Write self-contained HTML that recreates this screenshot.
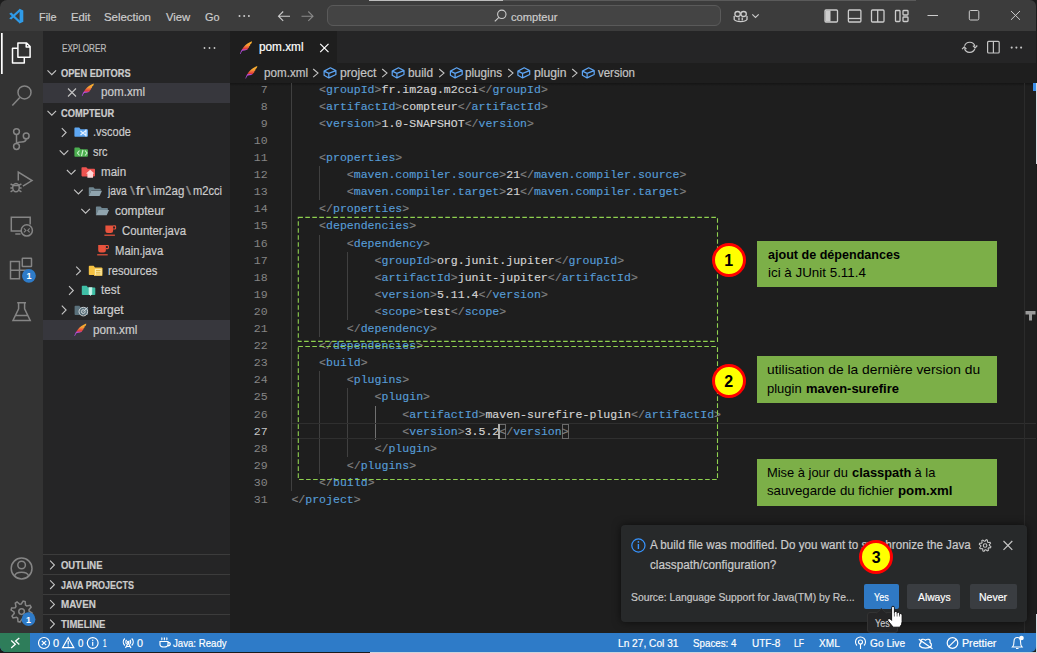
<!DOCTYPE html>
<html><head><meta charset="utf-8">
<style>
*{box-sizing:border-box;margin:0;padding:0}
html,body{width:1037px;height:653px;overflow:hidden;background:#1c1c1c}
body{position:relative;font-family:"Liberation Sans",sans-serif;color:#ccc}
.a{position:absolute}
#win{position:absolute;left:0;top:0;width:1036px;height:652px;background:#1e1e1e;border-radius:7px 6px 5px 6px;overflow:hidden}
.t{position:absolute;white-space:pre;line-height:1;transform-origin:0 0;-webkit-text-stroke:0.2px currentColor}
.menu{font-size:11.3px;color:#cccccc;top:11.2px}
.code{position:absolute;left:291.4px;font-family:"Liberation Mono",monospace;font-size:11.55px;line-height:17.1px;height:17.1px;white-space:pre;color:#d4d4d4;-webkit-text-stroke:0.15px currentColor}
.ln{position:absolute;left:230px;width:37.6px;text-align:right;font-family:"Liberation Mono",monospace;font-size:11.55px;line-height:17.1px;color:#858585}
.ln.act{color:#c6c6c6}
.tg{color:#569cd6}.br{color:#808080}
.ig{position:absolute;width:1px;background:#404040}
.ig.iga{background:#707070}
.tree{font-size:11.5px;color:#cccccc;top:0}
.hdr{font-size:9.4px;font-weight:bold;color:#cccccc}
.sb{font-size:10.2px;color:#ffffff}
.bc{font-size:11.5px;color:#a9a9a9}
.note{position:absolute;background:#7caf48;color:#1a1a1a;font-size:11.3px;line-height:18.3px;padding:5.5px 0 0 10px}
.note b{font-weight:bold}
.circ{position:absolute;z-index:10;width:34px;height:34px;border-radius:50%;background:#ffff00;border:3.2px solid #ff0000;color:#000;font-weight:bold;font-size:16px;text-align:center;line-height:30.5px}
.btn{position:absolute;height:25px;top:583.9px;border-radius:2px;font-size:11px;color:#fff;text-align:center;line-height:25px}
</style></head><body>
<div class="a" style="left:1036px;top:83px;width:1px;height:81px;background:#d9dde3"></div>
<div class="a" style="left:1036px;top:614px;width:1px;height:39px;background:#d9dde3"></div>
<div class="a" style="left:370px;top:652px;width:667px;height:1px;background:#d0d4da"></div>
<div id="win">
<!-- backgrounds -->
<div class="a" style="left:0;top:0;width:1036px;height:31px;background:#3c3c3c"></div>
<div class="a" style="left:369px;top:0;width:134px;height:1px;background:#bdbdbd"></div>
<div class="a" style="left:503px;top:0;width:413px;height:1px;background:#5a5a5a"></div>
<div class="a" style="left:0;top:118px;width:1px;height:11px;background:#3f6ea8"></div>
<div class="a" style="left:0;top:335px;width:1px;height:10px;background:#3f6ea8"></div>
<div class="a" style="left:0;top:31px;width:43px;height:602px;background:#333333"></div>
<div class="a" style="left:43px;top:31px;width:187px;height:602px;background:#252526"></div>
<div class="a" style="left:230px;top:31px;width:806px;height:32px;background:#252526"></div>
<div class="a" style="left:230px;top:31px;width:107px;height:32px;background:#1e1e1e"></div>
<div class="a" style="left:0;top:633px;width:1036px;height:20px;background:#2e7bc8"></div>
<div class="a" style="left:0;top:633px;width:30.4px;height:20px;background:#2e7d5a"></div>

<!-- title bar -->
<div class="a" style="left:327.2px;top:5.3px;width:394px;height:21.2px;border:1px solid #5a5a5a;border-radius:6px;background:#444444"></div>
<!-- sidebar -->
<div class="a" style="left:43px;top:83px;width:187px;height:19.8px;background:#37373d"></div>
<div class="a" style="left:43px;top:319.5px;width:187px;height:20px;background:#37373d"></div>
<div class="a" style="left:43px;top:554px;width:187px;height:1px;background:#3c3c3c"></div>
<div class="a" style="left:43px;top:574px;width:187px;height:1px;background:#3c3c3c"></div>
<div class="a" style="left:43px;top:594px;width:187px;height:1px;background:#3c3c3c"></div>
<div class="a" style="left:43px;top:613.5px;width:187px;height:1px;background:#3c3c3c"></div>

<!-- tabs & breadcrumbs -->
<div class="a" style="left:230px;top:82.8px;width:806px;height:3px;background:linear-gradient(#141414,rgba(30,30,30,0))"></div>

<!-- editor -->
<div class="ig" style="left:291.4px;top:82.80px;height:408.25px"></div>
<div class="ig" style="left:319.1px;top:166.15px;height:34.20px"></div>
<div class="ig" style="left:319.1px;top:234.55px;height:102.60px"></div>
<div class="ig" style="left:319.1px;top:371.35px;height:102.60px"></div>
<div class="ig" style="left:346.8px;top:251.65px;height:68.40px"></div>
<div class="ig" style="left:346.8px;top:388.45px;height:68.40px"></div>
<div class="ig iga" style="left:374.6px;top:405.55px;height:34.20px"></div>
<div class="a" style="left:292.2px;top:422.5px;width:744px;height:16.5px;border-top:1px solid #2f2f2f;border-bottom:1px solid #2f2f2f"></div>
<div class="a" style="left:499.3px;top:423.5px;width:6.93px;height:15px;border:1px solid #6a6a6a"></div>
<div class="a" style="left:561.7px;top:423.5px;width:6.93px;height:15px;border:1px solid #6a6a6a"></div>
<div class="ln" style="top:80.65px">7</div>
<div class="code" style="top:80.65px">    <span class="br">&lt;</span><span class="tg">groupId</span><span class="br">&gt;</span>fr.im2ag.m2cci<span class="br">&lt;/</span><span class="tg">groupId</span><span class="br">&gt;</span></div>
<div class="ln" style="top:97.75px">8</div>
<div class="code" style="top:97.75px">    <span class="br">&lt;</span><span class="tg">artifactId</span><span class="br">&gt;</span>compteur<span class="br">&lt;/</span><span class="tg">artifactId</span><span class="br">&gt;</span></div>
<div class="ln" style="top:114.85px">9</div>
<div class="code" style="top:114.85px">    <span class="br">&lt;</span><span class="tg">version</span><span class="br">&gt;</span>1.0-SNAPSHOT<span class="br">&lt;/</span><span class="tg">version</span><span class="br">&gt;</span></div>
<div class="ln" style="top:131.95px">10</div>
<div class="ln" style="top:149.05px">11</div>
<div class="code" style="top:149.05px">    <span class="br">&lt;</span><span class="tg">properties</span><span class="br">&gt;</span></div>
<div class="ln" style="top:166.15px">12</div>
<div class="code" style="top:166.15px">        <span class="br">&lt;</span><span class="tg">maven.compiler.source</span><span class="br">&gt;</span>21<span class="br">&lt;/</span><span class="tg">maven.compiler.source</span><span class="br">&gt;</span></div>
<div class="ln" style="top:183.25px">13</div>
<div class="code" style="top:183.25px">        <span class="br">&lt;</span><span class="tg">maven.compiler.target</span><span class="br">&gt;</span>21<span class="br">&lt;/</span><span class="tg">maven.compiler.target</span><span class="br">&gt;</span></div>
<div class="ln" style="top:200.35px">14</div>
<div class="code" style="top:200.35px">    <span class="br">&lt;/</span><span class="tg">properties</span><span class="br">&gt;</span></div>
<div class="ln" style="top:217.45px">15</div>
<div class="code" style="top:217.45px">    <span class="br">&lt;</span><span class="tg">dependencies</span><span class="br">&gt;</span></div>
<div class="ln" style="top:234.55px">16</div>
<div class="code" style="top:234.55px">        <span class="br">&lt;</span><span class="tg">dependency</span><span class="br">&gt;</span></div>
<div class="ln" style="top:251.65px">17</div>
<div class="code" style="top:251.65px">            <span class="br">&lt;</span><span class="tg">groupId</span><span class="br">&gt;</span>org.junit.jupiter<span class="br">&lt;/</span><span class="tg">groupId</span><span class="br">&gt;</span></div>
<div class="ln" style="top:268.75px">18</div>
<div class="code" style="top:268.75px">            <span class="br">&lt;</span><span class="tg">artifactId</span><span class="br">&gt;</span>junit-jupiter<span class="br">&lt;/</span><span class="tg">artifactId</span><span class="br">&gt;</span></div>
<div class="ln" style="top:285.85px">19</div>
<div class="code" style="top:285.85px">            <span class="br">&lt;</span><span class="tg">version</span><span class="br">&gt;</span>5.11.4<span class="br">&lt;/</span><span class="tg">version</span><span class="br">&gt;</span></div>
<div class="ln" style="top:302.95px">20</div>
<div class="code" style="top:302.95px">            <span class="br">&lt;</span><span class="tg">scope</span><span class="br">&gt;</span>test<span class="br">&lt;/</span><span class="tg">scope</span><span class="br">&gt;</span></div>
<div class="ln" style="top:320.05px">21</div>
<div class="code" style="top:320.05px">        <span class="br">&lt;/</span><span class="tg">dependency</span><span class="br">&gt;</span></div>
<div class="ln" style="top:337.15px">22</div>
<div class="code" style="top:337.15px">    <span class="br">&lt;/</span><span class="tg">dependencies</span><span class="br">&gt;</span></div>
<div class="ln" style="top:354.25px">23</div>
<div class="code" style="top:354.25px">    <span class="br">&lt;</span><span class="tg">build</span><span class="br">&gt;</span></div>
<div class="ln" style="top:371.35px">24</div>
<div class="code" style="top:371.35px">        <span class="br">&lt;</span><span class="tg">plugins</span><span class="br">&gt;</span></div>
<div class="ln" style="top:388.45px">25</div>
<div class="code" style="top:388.45px">            <span class="br">&lt;</span><span class="tg">plugin</span><span class="br">&gt;</span></div>
<div class="ln" style="top:405.55px">26</div>
<div class="code" style="top:405.55px">                <span class="br">&lt;</span><span class="tg">artifactId</span><span class="br">&gt;</span>maven-surefire-plugin<span class="br">&lt;/</span><span class="tg">artifactId</span><span class="br">&gt;</span></div>
<div class="ln act" style="top:422.65px">27</div>
<div class="code" style="top:422.65px">                <span class="br">&lt;</span><span class="tg">version</span><span class="br">&gt;</span>3.5.2<span class="br">&lt;/</span><span class="tg">version</span><span class="br">&gt;</span></div>
<div class="ln" style="top:439.75px">28</div>
<div class="code" style="top:439.75px">            <span class="br">&lt;/</span><span class="tg">plugin</span><span class="br">&gt;</span></div>
<div class="ln" style="top:456.85px">29</div>
<div class="code" style="top:456.85px">        <span class="br">&lt;/</span><span class="tg">plugins</span><span class="br">&gt;</span></div>
<div class="ln" style="top:473.95px">30</div>
<div class="code" style="top:473.95px">    <span class="br">&lt;/</span><span class="tg">build</span><span class="br">&gt;</span></div>
<div class="ln" style="top:491.05px">31</div>
<div class="code" style="top:491.05px"><span class="br">&lt;/</span><span class="tg">project</span><span class="br">&gt;</span></div>
<div class="a" style="left:498.2px;top:423.5px;width:1.5px;height:15px;background:#aeafad"></div>
<div class="a" style="left:1024px;top:83px;width:1px;height:550px;background:#2b2b2b"></div>
<div class="a" style="left:1033px;top:83px;width:3px;height:8px;background:#3b8eea"></div>

<!-- annotations -->
<svg class="a" style="left:0;top:0" width="1037" height="653">
<g fill="none" stroke="#8fd14f" stroke-width="1.1" stroke-dasharray="4.6 2.4">
<rect x="298.3" y="217.4" width="419.2" height="124"/>
<rect x="298.3" y="346.5" width="419.2" height="133"/>
</g>
</svg>
<div class="note" style="left:757.4px;top:240.7px;width:239.6px;height:46px"></div>
<div class="note" style="left:757.4px;top:356.2px;width:239.6px;height:46.8px"></div>
<div class="note" style="left:757.4px;top:458.7px;width:239.6px;height:47px"></div>
<div class="circ" style="left:711.7px;top:242.6px">1</div>
<div class="circ" style="left:711.7px;top:363.8px">2</div>

<!-- notification -->
<div class="a" style="left:621.2px;top:525.2px;width:405.5px;height:96.8px;background:#27292a;border-radius:4px;box-shadow:0 0 8px rgba(0,0,0,0.6)"></div>
<div class="btn" style="left:863.9px;width:35px;background:#2f79c4"></div>
<div class="btn" style="left:907.3px;width:53px;background:#3a3d41"></div>
<div class="btn" style="left:969.5px;width:47.3px;background:#3a3d41"></div>
<div class="a" style="left:866.7px;top:612.3px;width:31px;height:21px;background:#252526;border:1px solid #333333;border-radius:3px"></div>
<svg class="a" style="left:876px;top:607.5px" width="11" height="6"><path d="M0 5.5 L5.4 0.5 L10.8 5.5" fill="#252526" stroke="#333333" stroke-width="1"/><rect x="0.8" y="4.9" width="9.4" height="1.2" fill="#252526"/></svg>
<div class="circ" style="left:859.2px;top:540px">3</div>

<!-- status bar -->

<div class="t" style="left:38.50px;top:10.68px;font-size:11.6px;color:#cccccc;transform:scaleX(0.9358);">File</div>
<div class="t" style="left:70.60px;top:10.68px;font-size:11.6px;color:#cccccc;transform:scaleX(0.9700);">Edit</div>
<div class="t" style="left:104.00px;top:10.68px;font-size:11.6px;color:#cccccc;transform:scaleX(0.9848);">Selection</div>
<div class="t" style="left:165.70px;top:10.68px;font-size:11.6px;color:#cccccc;transform:scaleX(0.9730);">View</div>
<div class="t" style="left:204.50px;top:10.68px;font-size:11.6px;color:#cccccc;transform:scaleX(0.9370);">Go</div>
<div class="t" style="left:511.00px;top:10.98px;font-size:11.6px;color:#cccccc;transform:scaleX(0.9617);">compteur</div>
<div class="t" style="left:61.50px;top:43.68px;font-size:10.3px;color:#bbbbbb;transform:scaleX(0.7897);">EXPLORER</div>
<div class="t" style="left:61.30px;top:68.58px;font-size:10.3px;color:#cccccc;font-weight:bold;transform:scaleX(0.8963);">OPEN EDITORS</div>
<div class="t" style="left:61.30px;top:108.88px;font-size:10.3px;color:#cccccc;font-weight:bold;transform:scaleX(0.9025);">COMPTEUR</div>
<div class="t" style="left:61.20px;top:560.78px;font-size:10.3px;color:#cccccc;font-weight:bold;transform:scaleX(0.9181);">OUTLINE</div>
<div class="t" style="left:61.20px;top:580.58px;font-size:10.3px;color:#cccccc;font-weight:bold;transform:scaleX(0.8684);">JAVA PROJECTS</div>
<div class="t" style="left:61.20px;top:600.28px;font-size:10.3px;color:#cccccc;font-weight:bold;transform:scaleX(0.9554);">MAVEN</div>
<div class="t" style="left:61.20px;top:619.88px;font-size:10.3px;color:#cccccc;font-weight:bold;transform:scaleX(0.9236);">TIMELINE</div>
<div class="t" style="left:100.70px;top:86.49px;font-size:12.3px;color:#cccccc;transform:scaleX(0.9467);">pom.xml</div>
<div class="t" style="left:93.40px;top:126.09px;font-size:12.3px;color:#cccccc;transform:scaleX(0.8939);">.vscode</div>
<div class="t" style="left:93.40px;top:145.89px;font-size:12.3px;color:#cccccc;transform:scaleX(0.8902);">src</div>
<div class="t" style="left:100.70px;top:165.69px;font-size:12.3px;color:#cccccc;transform:scaleX(0.9418);">main</div>
<div class="t" style="left:114.90px;top:205.29px;font-size:12.3px;color:#cccccc;transform:scaleX(0.9712);">compteur</div>
<div class="t" style="left:122.00px;top:225.09px;font-size:12.3px;color:#cccccc;transform:scaleX(0.9265);">Counter.java</div>
<div class="t" style="left:115.20px;top:244.89px;font-size:12.3px;color:#cccccc;transform:scaleX(0.9155);">Main.java</div>
<div class="t" style="left:107.70px;top:264.69px;font-size:12.3px;color:#cccccc;transform:scaleX(0.9130);">resources</div>
<div class="t" style="left:100.90px;top:284.49px;font-size:12.3px;color:#cccccc;transform:scaleX(0.9533);">test</div>
<div class="t" style="left:93.20px;top:304.29px;font-size:12.3px;color:#cccccc;transform:scaleX(0.9762);">target</div>
<div class="t" style="left:93.20px;top:324.09px;font-size:12.3px;color:#cccccc;transform:scaleX(0.9554);">pom.xml</div>
<div class="t" style="left:108.27px;top:185.49px;font-size:12.3px;color:#cccccc;transform:scaleX(0.8341);">java</div>
<div class="t" style="left:130.00px;top:185.49px;font-size:12.3px;color:#8a8a8a;transform:scaleX(1.4599);">\</div>
<div class="t" style="left:136.40px;top:185.49px;font-size:12.3px;color:#cccccc;transform:scaleX(1.1561);">fr</div>
<div class="t" style="left:146.20px;top:185.49px;font-size:12.3px;color:#8a8a8a;transform:scaleX(1.5474);">\</div>
<div class="t" style="left:152.60px;top:185.49px;font-size:12.3px;color:#cccccc;transform:scaleX(0.9343);">im2ag</div>
<div class="t" style="left:186.40px;top:185.49px;font-size:12.3px;color:#8a8a8a;transform:scaleX(1.4599);">\</div>
<div class="t" style="left:192.50px;top:185.49px;font-size:12.3px;color:#cccccc;transform:scaleX(0.9027);">m2cci</div>
<div class="t" style="left:258.50px;top:41.42px;font-size:12.5px;color:#ffffff;transform:scaleX(0.9423);">pom.xml</div>
<div class="t" style="left:264.20px;top:67.09px;font-size:12.3px;color:#c4c4c4;transform:scaleX(0.9467);">pom.xml</div>
<div class="t" style="left:339.70px;top:67.09px;font-size:12.3px;color:#c4c4c4;transform:scaleX(0.9831);">project</div>
<div class="t" style="left:408.00px;top:67.09px;font-size:12.3px;color:#c4c4c4;transform:scaleX(0.9615);">build</div>
<div class="t" style="left:465.00px;top:67.09px;font-size:12.3px;color:#c4c4c4;transform:scaleX(0.9493);">plugins</div>
<div class="t" style="left:533.50px;top:67.09px;font-size:12.3px;color:#c4c4c4;transform:scaleX(0.9901);">plugin</div>
<div class="t" style="left:598.00px;top:67.09px;font-size:12.3px;color:#c4c4c4;transform:scaleX(0.9332);">version</div>
<div class="t" style="left:650.30px;top:539.12px;font-size:12.5px;color:#cccccc;transform:scaleX(0.9305);">A build file was modified. Do you want to synchronize the Java</div>
<div class="t" style="left:650.30px;top:558.62px;font-size:12.5px;color:#cccccc;transform:scaleX(0.9362);">classpath/configuration?</div>
<div class="t" style="left:631.20px;top:590.78px;font-size:11.6px;color:#c8c8c8;transform:scaleX(0.8923);">Source: Language Support for Java(TM) by Re...</div>
<div class="t" style="left:874.20px;top:590.98px;font-size:11.6px;color:#ffffff;transform:scaleX(0.7820);">Yes</div>
<div class="t" style="left:917.90px;top:590.98px;font-size:11.6px;color:#ffffff;transform:scaleX(0.8898);">Always</div>
<div class="t" style="left:979.30px;top:590.98px;font-size:11.6px;color:#ffffff;transform:scaleX(0.9079);">Never</div>
<div class="t" style="left:874.70px;top:616.88px;font-size:11.6px;color:#c8c8c8;transform:scaleX(0.7768);">Yes</div>
<div class="t" style="left:52.50px;top:637.85px;font-size:11.4px;color:#ffffff;transform:scaleX(0.9606);">0</div>
<div class="t" style="left:77.60px;top:637.85px;font-size:11.4px;color:#ffffff;transform:scaleX(0.8504);">0</div>
<div class="t" style="left:102.50px;top:637.85px;font-size:11.4px;color:#ffffff;transform:scaleX(0.5512);">1</div>
<div class="t" style="left:137.40px;top:637.85px;font-size:11.4px;color:#ffffff;transform:scaleX(0.9449);">0</div>
<div class="t" style="left:173.00px;top:637.85px;font-size:11.4px;color:#ffffff;transform:scaleX(0.8458);">Java: Ready</div>
<div class="t" style="left:618.00px;top:637.85px;font-size:11.4px;color:#ffffff;transform:scaleX(0.8920);">Ln 27, Col 31</div>
<div class="t" style="left:693.30px;top:637.85px;font-size:11.4px;color:#ffffff;transform:scaleX(0.8580);">Spaces: 4</div>
<div class="t" style="left:751.70px;top:637.85px;font-size:11.4px;color:#ffffff;transform:scaleX(0.8762);">UTF-8</div>
<div class="t" style="left:794.00px;top:637.85px;font-size:11.4px;color:#ffffff;transform:scaleX(0.7519);">LF</div>
<div class="t" style="left:818.80px;top:637.85px;font-size:11.4px;color:#ffffff;transform:scaleX(0.8870);">XML</div>
<div class="t" style="left:869.50px;top:637.85px;font-size:11.4px;color:#ffffff;transform:scaleX(0.8931);">Go Live</div>
<div class="t" style="left:962.10px;top:637.85px;font-size:11.4px;color:#ffffff;transform:scaleX(0.9361);">Prettier</div>
<div class="t" style="left:767.70px;top:248.86px;font-size:12.799999999999999px;color:#000000;-webkit-text-stroke:0;font-weight:bold;transform:scaleX(0.9820);">ajout de dépendances</div>
<div class="t" style="left:767.70px;top:266.13px;font-size:13.2px;color:#000000;-webkit-text-stroke:0;transform:scaleX(1.0145);">ici à JUnit 5.11.4</div>
<div class="t" style="left:767.30px;top:363.33px;font-size:13.2px;color:#000000;-webkit-text-stroke:0;transform:scaleX(1.0456);">utilisation de la dernière version du</div>
<div class="t" style="left:767.30px;top:381.63px;font-size:13.2px;color:#000000;-webkit-text-stroke:0;transform:scaleX(0.9832);">plugin </div>
<div class="t" style="left:805.54px;top:381.63px;font-size:13.2px;color:#000000;-webkit-text-stroke:0;font-weight:bold;transform:scaleX(0.9832);">maven-surefire</div>
<div class="t" style="left:767.30px;top:466.23px;font-size:13.2px;color:#000000;-webkit-text-stroke:0;transform:scaleX(0.9767);">Mise à jour du </div>
<div class="t" style="left:851.86px;top:466.23px;font-size:13.2px;color:#000000;-webkit-text-stroke:0;font-weight:bold;transform:scaleX(0.9767);">classpath</div>
<div class="t" style="left:911.33px;top:466.23px;font-size:13.2px;color:#000000;-webkit-text-stroke:0;transform:scaleX(0.9767);"> à la</div>
<div class="t" style="left:767.30px;top:484.43px;font-size:13.2px;color:#000000;-webkit-text-stroke:0;transform:scaleX(1.0046);">sauvegarde du fichier </div>
<div class="t" style="left:897.78px;top:484.43px;font-size:13.2px;color:#000000;-webkit-text-stroke:0;font-weight:bold;transform:scaleX(1.0046);">pom.xml</div>
<svg class="a" style="left:0;top:0;pointer-events:none" width="1037" height="653" viewBox="0 0 1037 653">
<defs>
<linearGradient id="fg" x1="0" y1="0" x2="0" y2="1">
<stop offset="0" stop-color="#f7b32e"/><stop offset="0.3" stop-color="#f6a032"/><stop offset="0.42" stop-color="#f2703c"/><stop offset="0.6" stop-color="#dc3a3a"/><stop offset="0.68" stop-color="#b84bd4"/><stop offset="1" stop-color="#a048d0"/>
</linearGradient>
</defs>
<g fill="#2f9be8"><path d="M19.6 8.8 L23.3 10.6 L23.3 21.8 L19.6 23.5 Z"/><path d="M19.8 8.8 L21 10.5 L11.3 19.6 L9.2 18.5 Z"/><path d="M9.2 13.7 L11.3 12.6 L21 21.8 L19.8 23.5 Z"/></g>
<g fill="#cccccc"><circle cx="239.5" cy="16" r="1"/><circle cx="244.2" cy="16" r="1"/><circle cx="248.9" cy="16" r="1"/></g>
<g fill="none" stroke="#cccccc" stroke-width="1.1"><path d="M278.5 16.2 H290 M283.2 11.5 L278.5 16.2 L283.2 20.9"/></g>
<g fill="none" stroke="#8a8a8a" stroke-width="1.1"><path d="M301.5 16.2 H313 M308.3 11.5 L313 16.2 L308.3 20.9"/></g>
<g fill="none" stroke="#cccccc" stroke-width="1.1"><circle cx="501.8" cy="14.3" r="4.2"/><path d="M498.9 17.3 L494.8 21.4"/></g>
<g fill="none" stroke="#cccccc" stroke-width="1.3"><ellipse cx="737.6" cy="14" rx="2.7" ry="2.5"/><ellipse cx="743.6" cy="14" rx="2.7" ry="2.5"/><path d="M734.2 16 V19.5 C736 22.3 745.2 22.3 747 19.5 V16"/></g>
<g fill="#cccccc"><rect x="738.3" y="17.5" width="1.3" height="3"/><rect x="741.6" y="17.5" width="1.3" height="3"/></g>
<path d="M752.3 14.3 L755.5 17.5 L758.7 14.3" fill="none" stroke="#cccccc" stroke-width="1.1"/>
<g fill="none" stroke="#cccccc" stroke-width="1.3"><rect x="825" y="10" width="12.5" height="12" rx="1"/><rect x="848.4" y="10" width="12.5" height="12" rx="1"/><path d="M848.4 18.5 H860.9"/><rect x="871.5" y="10" width="12.5" height="12" rx="1"/><path d="M877.7 10 V22"/><rect x="895.5" y="10.5" width="4.5" height="11" rx="0.8"/><rect x="903" y="10.5" width="5" height="4.5" rx="0.8"/><rect x="903" y="17" width="5" height="4.5" rx="0.8"/></g>
<rect x="825.5" y="10.5" width="5" height="11" fill="#cccccc"/>
<g fill="none" stroke="#cccccc" stroke-width="1"><path d="M927.5 15.5 H938"/><rect x="969.3" y="10.5" width="9.5" height="9.5" rx="1.2"/><path d="M1011 11 L1020 19.8 M1020 11 L1011 19.8"/></g>
<g fill="none" stroke="#ffffff" stroke-width="1.5" stroke-linejoin="round"><path d="M17.9 43 H26.6 L30.1 46.6 V57.2 H17.9 Z M26.2 43 V47 H30.1"/><path d="M17.9 48.3 H12.5 V62.9 H24.3 V57.2"/></g>
<rect x="1" y="33" width="1.7" height="41" fill="#ffffff"/>
<g fill="none" stroke="#858585" stroke-width="1.5"><circle cx="24.5" cy="92.4" r="6.5"/><path d="M19.8 97.5 L12.3 105.5"/><circle cx="16.5" cy="131.6" r="2.9"/><circle cx="26.2" cy="135.9" r="2.9"/><circle cx="16.5" cy="146.5" r="2.9"/><path d="M16.5 134.5 V143.6 M26.2 138.8 C26.2 141.6 24.5 142 21.5 142 C18.3 142 16.5 142.3 16.5 144"/><path d="M18.3 180.5 V172.2 L32 180.6 L22.9 186.2"/><ellipse cx="16" cy="187.6" rx="3.3" ry="4.2"/><path d="M12.8 185.6 H19.2 M10.6 184 L12.9 185.2 M21.4 184 L19.1 185.2 M10.4 188 H12.7 M21.6 188 H19.3 M10.6 191.8 L12.9 190.4 M21.4 191.8 L19.1 190.4"/><path d="M21 231 H11.3 V217.2 H30.2 V224.5"/><path d="M15.3 233.9 H20.5"/><circle cx="26.8" cy="230.4" r="5.6"/><path d="M10.5 261.6 H19.5 V278.8 H10.5 Z M10.5 270.2 H28 V278.8 M19.5 270.2"/><rect x="22.3" y="258.2" width="9.2" height="8.3" rx="0.5"/><path d="M17.2 302.8 H26 M18.6 302.8 V308.8 L13 320.4 H30.2 L24.6 308.8 V302.8 M15.2 315.5 H28"/><circle cx="21.6" cy="568.5" r="10.4"/><circle cx="21.6" cy="565" r="3.8"/><path d="M14.5 576 C16 571 27 571 28.7 576"/></g>
<g fill="none" stroke="#858585" stroke-width="1.1"><path d="M23.9 228.4 L25.9 230.4 L23.9 232.4 M29.7 228.4 L27.7 230.4 L29.7 232.4"/></g>
<g fill="none" stroke="#858585" stroke-width="1.5"><path d="M29.19 611.23 L32.09 613.16 L31.58 615.17 L28.12 615.51 L27.23 616.70 L27.91 620.11 L26.13 621.18 L23.45 618.97 L21.97 619.19 L20.04 622.09 L18.03 621.58 L17.69 618.12 L16.50 617.23 L13.09 617.91 L12.02 616.13 L14.23 613.45 L14.01 611.97 L11.11 610.04 L11.62 608.03 L15.08 607.69 L15.97 606.50 L15.29 603.09 L17.07 602.02 L19.75 604.23 L21.23 604.01 L23.16 601.11 L25.17 601.62 L25.51 605.08 L26.70 605.97 L30.11 605.29 L31.18 607.07 L28.97 609.75 Z"/><circle cx="21.6" cy="611.6" r="2.8"/></g>
<circle cx="28.9" cy="275.8" r="6.9" fill="#2e7bc8"/><text x="28.9" y="279.2" font-family="Liberation Sans" font-size="9" font-weight="bold" fill="#fff" text-anchor="middle">1</text>
<circle cx="28.5" cy="619.2" r="6.9" fill="#2e7bc8"/><text x="28.5" y="622.6" font-family="Liberation Sans" font-size="9" font-weight="bold" fill="#fff" text-anchor="middle">1</text>
<g fill="#cccccc"><circle cx="204.5" cy="48" r="0.9"/><circle cx="209.5" cy="48" r="0.9"/><circle cx="214.5" cy="48" r="0.9"/></g>
<path d="M47.5 70.3 L51.8 74.6 L56.099999999999994 70.3" fill="none" stroke="#c5c5c5" stroke-width="1.1"/>
<path d="M47.5 110.8 L51.8 115.1 L56.099999999999994 110.8" fill="none" stroke="#c5c5c5" stroke-width="1.1"/>
<path d="M61.8 128.2 L66.1 132.5 L61.8 136.8" fill="none" stroke="#c5c5c5" stroke-width="1.1"/>
<path d="M59.7 150.4 L64 154.7 L68.3 150.4" fill="none" stroke="#c5c5c5" stroke-width="1.1"/>
<path d="M66.9 170.0 L71.2 174.29999999999998 L75.5 170.0" fill="none" stroke="#c5c5c5" stroke-width="1.1"/>
<path d="M74.10000000000001 189.60000000000002 L78.4 193.9 L82.7 189.60000000000002" fill="none" stroke="#c5c5c5" stroke-width="1.1"/>
<path d="M81.3 208.8 L85.6 213.1 L89.89999999999999 208.8" fill="none" stroke="#c5c5c5" stroke-width="1.1"/>
<path d="M76.2 266.59999999999997 L80.5 270.9 L76.2 275.2" fill="none" stroke="#c5c5c5" stroke-width="1.1"/>
<path d="M69.0 286.2 L73.3 290.5 L69.0 294.8" fill="none" stroke="#c5c5c5" stroke-width="1.1"/>
<path d="M61.8 305.7 L66.1 310 L61.8 314.3" fill="none" stroke="#c5c5c5" stroke-width="1.1"/>
<path d="M50.099999999999994 560.7 L54.4 565 L50.099999999999994 569.3" fill="none" stroke="#c5c5c5" stroke-width="1.1"/>
<path d="M50.099999999999994 580.4000000000001 L54.4 584.7 L50.099999999999994 589.0" fill="none" stroke="#c5c5c5" stroke-width="1.1"/>
<path d="M50.099999999999994 600.1 L54.4 604.4 L50.099999999999994 608.6999999999999" fill="none" stroke="#c5c5c5" stroke-width="1.1"/>
<path d="M50.099999999999994 619.7 L54.4 624 L50.099999999999994 628.3" fill="none" stroke="#c5c5c5" stroke-width="1.1"/>
<path d="M68 88.5 L76 96.5 M76 88.5 L68 96.5" fill="none" stroke="#c5c5c5" stroke-width="1.1"/>
<g transform="translate(240,41.3) scale(1.0)"><path d="M0 12.6 C1.5 8 4.5 3 11.9 0 C12.2 1.5 11.2 2.6 10 3.3 C10.6 3.6 10.2 4.6 9 5.3 C9.4 5.9 8.8 6.8 7.8 7.4 C8 8.1 6.6 8.7 5.5 8.9 C4.6 9.2 3.2 9.2 2.4 9.4 C1.6 10.5 1 11.5 0.7 12.6 Z" fill="url(#fg)"/></g>
<g transform="translate(245.3,66) scale(1.0)"><path d="M0 12.6 C1.5 8 4.5 3 11.9 0 C12.2 1.5 11.2 2.6 10 3.3 C10.6 3.6 10.2 4.6 9 5.3 C9.4 5.9 8.8 6.8 7.8 7.4 C8 8.1 6.6 8.7 5.5 8.9 C4.6 9.2 3.2 9.2 2.4 9.4 C1.6 10.5 1 11.5 0.7 12.6 Z" fill="url(#fg)"/></g>
<g transform="translate(81.8,83.5) scale(1.0)"><path d="M0 12.6 C1.5 8 4.5 3 11.9 0 C12.2 1.5 11.2 2.6 10 3.3 C10.6 3.6 10.2 4.6 9 5.3 C9.4 5.9 8.8 6.8 7.8 7.4 C8 8.1 6.6 8.7 5.5 8.9 C4.6 9.2 3.2 9.2 2.4 9.4 C1.6 10.5 1 11.5 0.7 12.6 Z" fill="url(#fg)"/></g>
<g transform="translate(74.3,323.5) scale(1.0)"><path d="M0 12.6 C1.5 8 4.5 3 11.9 0 C12.2 1.5 11.2 2.6 10 3.3 C10.6 3.6 10.2 4.6 9 5.3 C9.4 5.9 8.8 6.8 7.8 7.4 C8 8.1 6.6 8.7 5.5 8.9 C4.6 9.2 3.2 9.2 2.4 9.4 C1.6 10.5 1 11.5 0.7 12.6 Z" fill="url(#fg)"/></g>
<path d="M320.2 43.8 L328.5 52.1 M328.5 43.8 L320.2 52.1" fill="none" stroke="#ffffff" stroke-width="1.2"/>
<path d="M313.2 69 L318.0 73.1 L313.2 77.2" fill="none" stroke="#c4c4c4" stroke-width="1.1"/>
<path d="M382.2 69 L387.0 73.1 L382.2 77.2" fill="none" stroke="#c4c4c4" stroke-width="1.1"/>
<path d="M439.2 69 L444.0 73.1 L439.2 77.2" fill="none" stroke="#c4c4c4" stroke-width="1.1"/>
<path d="M508.2 69 L513.0 73.1 L508.2 77.2" fill="none" stroke="#c4c4c4" stroke-width="1.1"/>
<path d="M572.1999999999999 69 L577.0 73.1 L572.1999999999999 77.2" fill="none" stroke="#c4c4c4" stroke-width="1.1"/>
<g transform="translate(323.5,67.2)" fill="none" stroke="#5ea6f5" stroke-width="1.2" stroke-linejoin="round"><path d="M0.6 3.9 L6.9 0.6 L12.4 3.4 V7.3 L5.3 10.7 L0.6 8 Z M0.6 3.9 L5.3 6.2 L12.4 3.4 M5.3 6.2 V10.7"/></g>
<g transform="translate(391.6,67.2)" fill="none" stroke="#5ea6f5" stroke-width="1.2" stroke-linejoin="round"><path d="M0.6 3.9 L6.9 0.6 L12.4 3.4 V7.3 L5.3 10.7 L0.6 8 Z M0.6 3.9 L5.3 6.2 L12.4 3.4 M5.3 6.2 V10.7"/></g>
<g transform="translate(449.8,67.2)" fill="none" stroke="#5ea6f5" stroke-width="1.2" stroke-linejoin="round"><path d="M0.6 3.9 L6.9 0.6 L12.4 3.4 V7.3 L5.3 10.7 L0.6 8 Z M0.6 3.9 L5.3 6.2 L12.4 3.4 M5.3 6.2 V10.7"/></g>
<g transform="translate(517.3,67.2)" fill="none" stroke="#5ea6f5" stroke-width="1.2" stroke-linejoin="round"><path d="M0.6 3.9 L6.9 0.6 L12.4 3.4 V7.3 L5.3 10.7 L0.6 8 Z M0.6 3.9 L5.3 6.2 L12.4 3.4 M5.3 6.2 V10.7"/></g>
<g transform="translate(581.8,67.2)" fill="none" stroke="#5ea6f5" stroke-width="1.2" stroke-linejoin="round"><path d="M0.6 3.9 L6.9 0.6 L12.4 3.4 V7.3 L5.3 10.7 L0.6 8 Z M0.6 3.9 L5.3 6.2 L12.4 3.4 M5.3 6.2 V10.7"/></g>
<g fill="none" stroke="#c5c5c5" stroke-width="1.2"><path d="M964.6 45.8 A5.4 5.4 0 0 1 974.9 46.3 M974.8 48.8 A5.4 5.4 0 0 1 964.5 48.3"/><path d="M972.9 45.6 L975.1 47.9 L977.3 45.5 M966.4 49.2 L964.3 46.8 L962.1 49.2"/><rect x="987.6" y="41.4" width="11.6" height="11.6" rx="1"/><path d="M993.4 41.4 V53"/></g>
<g fill="#c5c5c5"><circle cx="1011.7" cy="47.6" r="1.05"/><circle cx="1016.4" cy="47.6" r="1.05"/><circle cx="1021.1" cy="47.6" r="1.05"/></g>
<g fill="none" stroke="#3794ff" stroke-width="1.2"><circle cx="638.4" cy="545.5" r="6.6"/></g><rect x="637.7" y="544" width="1.4" height="5" fill="#3794ff"/><circle cx="638.4" cy="541.9" r="0.85" fill="#3794ff"/>
<path d="M1003.5 541 L1012.3 549.8 M1012.3 541 L1003.5 549.8" fill="none" stroke="#c5c5c5" stroke-width="1.2"/>
<g fill="none" stroke="#c5c5c5" stroke-width="1.1"><path d="M989.40 545.50 L990.89 546.65 L990.55 547.76 L988.68 547.89 L988.14 548.54 L988.38 550.41 L987.36 550.95 L985.94 549.72 L985.10 549.80 L983.95 551.29 L982.84 550.95 L982.71 549.08 L982.06 548.54 L980.19 548.78 L979.65 547.76 L980.88 546.34 L980.80 545.50 L979.31 544.35 L979.65 543.24 L981.52 543.11 L982.06 542.46 L981.82 540.59 L982.84 540.05 L984.26 541.28 L985.10 541.20 L986.25 539.71 L987.36 540.05 L987.49 541.92 L988.14 542.46 L990.01 542.22 L990.55 543.24 L989.32 544.66 Z"/><circle cx="985.1" cy="545.5" r="1.8"/></g>
<g fill="none" stroke="#ffffff" stroke-width="1.2"><circle cx="44" cy="643" r="5.5"/><path d="M41.8 640.8 L46.2 645.2 M46.2 640.8 L41.8 645.2"/><path d="M68.2 637.8 L73.8 647.6 H62.6 Z"/><circle cx="92.7" cy="643" r="5.4"/><path d="M124.8 638.5 C122.8 640.5 122.8 643.5 124.8 645.5 M131.7 638.5 C133.7 640.5 133.7 643.5 131.7 645.5 M126.6 640 C125.6 641 125.6 643 126.6 644 M129.9 640 C130.9 641 130.9 643 129.9 644 M128.25 643 L125.5 648 M128.25 643 L131 648 M126.3 646.5 H130.2"/><path d="M160 641.5 H168 V644.5 C168 647.8 160 647.8 160 644.5 Z M168 642.3 C171 642.3 171 645.8 168 645.8 M161.5 640 C162.5 639 161.5 638.5 162 637.5 M164 640 C165 639 164 638.5 164.5 637.5 M166.5 640 C167.5 639 166.5 638.5 167 637.5"/></g>
<rect x="67.6" y="640.8" width="1.2" height="3.8" fill="#fff"/><circle cx="68.2" cy="646" r="0.7" fill="#fff"/><rect x="92.1" y="641.8" width="1.2" height="4" fill="#fff"/><circle cx="92.7" cy="640.2" r="0.75" fill="#fff"/><circle cx="128.25" cy="642" r="1.3" fill="#fff"/>
<path d="M11.2 640.6 L15.3 644.2 L11.2 647.9 M19.3 637.9 L15.6 641.1 L19.3 644.4" fill="none" stroke="#ffffff" stroke-width="1.3"/>
<g fill="none" stroke="#fff" stroke-width="1.1"><circle cx="860.5" cy="642" r="2"/><path d="M857 645.5 A5 5 0 1 1 864 645.5"/><path d="M860.5 644 V649"/></g>
<g fill="none" stroke="#fff" stroke-width="1.2"><path d="M921 642.5 C920 639 923.5 638.5 925.5 640.3 C927.5 638.5 931 639 930 642.5 L931.3 644 V646 C929 648.8 922 648.8 919.7 646 V644 Z M918.8 639.2 L932.5 648.8"/></g>
<g fill="none" stroke="#fff" stroke-width="1.2"><circle cx="952.5" cy="643" r="5.3"/><path d="M948.8 646.7 L956.2 639.3"/></g>
<g fill="none" stroke="#fff" stroke-width="1.1"><path d="M1012.5 647 H1022 C1020.5 645.5 1020.5 644 1020.5 641.5 C1020.5 638.5 1018.5 637.5 1017.3 637.5 C1016 637.5 1014 638.5 1014 641.5 C1014 644 1014 645.5 1012.5 647 Z M1016 648.5 H1018.5"/></g><circle cx="1021.5" cy="638" r="2.3" fill="#fff"/>
</svg><svg class="a" style="left:0;top:0;pointer-events:none" width="1037" height="653" viewBox="0 0 1037 653">
<path transform="translate(74.4,127.6)" fill="#5ea7f2" d="M0 0.8 Q0 0 0.8 0 H4.8 L6.2 1.6 H12.7 Q13.5 1.6 13.5 2.4 V8.399999999999999 Q13.5 9.2 12.7 9.2 H0.8 Q0 9.2 0 8.399999999999999 Z"/>
<path d="M80.5 131 L86 135.5 M80.5 135 L86 130.5 M86 129.5 V136.5" stroke="#e3f0ff" stroke-width="1.3" fill="none"/>
<path transform="translate(74.4,147.6)" fill="#4caf50" d="M0 0.8 Q0 0 0.8 0 H4.8 L6.2 1.6 H12.7 Q13.5 1.6 13.5 2.4 V8.399999999999999 Q13.5 9.2 12.7 9.2 H0.8 Q0 9.2 0 8.399999999999999 Z"/>
<path d="M79.5 150.5 L77.5 153 L79.5 155.5 M85 150.5 L87 153 L85 155.5 M83 149.8 L81.5 156.2" stroke="#c8f0c8" stroke-width="1.2" fill="none"/>
<path transform="translate(81.5,167.2)" fill="#ef5350" d="M0 0.8 Q0 0 0.8 0 H4.8 L6.2 1.6 H12.7 Q13.5 1.6 13.5 2.4 V8.399999999999999 Q13.5 9.2 12.7 9.2 H0.8 Q0 9.2 0 8.399999999999999 Z"/>
<path d="M86 173.5 L90.2 169.8 L94.4 173.5 H93 V177.8 H87.4 V173.5 Z" fill="#ffd5d5"/>
<g transform="translate(88.8,187.3)"><path fill="#6f8590" d="M0 0.8 Q0 0 0.8 0 H4.6 L6 1.5 H11.2 Q12 1.5 12 2.3 V3.3 H2.6 L0 8.6 Z"/><path fill="#90a4ae" d="M2.4 3.4 H13.2 L10.799999999999999 8.6 H0 Z"/></g>
<g transform="translate(95.9,206.6)"><path fill="#6f8590" d="M0 0.8 Q0 0 0.8 0 H4.6 L6 1.5 H11.2 Q12 1.5 12 2.3 V3.3 H2.6 L0 8.6 Z"/><path fill="#90a4ae" d="M2.4 3.4 H13.2 L10.799999999999999 8.6 H0 Z"/></g>
<g transform="translate(104.6,225.4)" fill="#e8533d"><path d="M0.8 0 H8.5 V5 Q8.5 7.5 6 7.5 H3.3 Q0.8 7.5 0.8 5 Z"/><path d="M8.5 0.5 H10.2 Q11 0.5 11 1.3 V2.8 Q11 3.6 10.2 3.6 H8.5" fill="none" stroke="#e8533d" stroke-width="1.1"/><rect x="-0.2" y="9.2" width="10.5" height="1.2"/></g>
<g transform="translate(97.4,245)" fill="#e8533d"><path d="M0.8 0 H8.5 V5 Q8.5 7.5 6 7.5 H3.3 Q0.8 7.5 0.8 5 Z"/><path d="M8.5 0.5 H10.2 Q11 0.5 11 1.3 V2.8 Q11 3.6 10.2 3.6 H8.5" fill="none" stroke="#e8533d" stroke-width="1.1"/><rect x="-0.2" y="9.2" width="10.5" height="1.2"/></g>
<path transform="translate(88.8,265.8)" fill="#f5c242" d="M0 0.8 Q0 0 0.8 0 H4.8 L6.2 1.6 H12.7 Q13.5 1.6 13.5 2.4 V8.399999999999999 Q13.5 9.2 12.7 9.2 H0.8 Q0 9.2 0 8.399999999999999 Z"/>
<rect x="94.5" y="268.5" width="7.5" height="7.2" fill="#fbe9a6" stroke="#f5c242" stroke-width="0.6"/><path d="M96 270.5 H100.5 M96 272.3 H100.5 M96 274 H100.5" stroke="#d9a520" stroke-width="0.7"/>
<path transform="translate(81.8,285.8)" fill="#3fbfa6" d="M0 0.8 Q0 0 0.8 0 H4.8 L6.2 1.6 H12.7 Q13.5 1.6 13.5 2.4 V8.399999999999999 Q13.5 9.2 12.7 9.2 H0.8 Q0 9.2 0 8.399999999999999 Z"/>
<path d="M88.6 287.8 H92.3 M89.2 287.8 V294.2 Q90.45 296.2 91.7 294.2 V287.8" fill="#c9f3ea" stroke="#c9f3ea" stroke-width="0.9"/>
<path transform="translate(74.6,305.8)" fill="#5a717c" d="M0 0.8 Q0 0 0.8 0 H4.8 L6.2 1.6 H12.7 Q13.5 1.6 13.5 2.4 V8.399999999999999 Q13.5 9.2 12.7 9.2 H0.8 Q0 9.2 0 8.399999999999999 Z"/>
<circle cx="83.3" cy="311.6" r="4.3" fill="none" stroke="#d0d6d9" stroke-width="1"/><circle cx="83.3" cy="311.6" r="1.9" fill="none" stroke="#d0d6d9" stroke-width="1"/><path d="M83.3 311.6 L87.6 307.3" stroke="#d0d6d9" stroke-width="1"/>
<path d="M891.6 618 V607.8 Q891.6 606.2 893 606.2 Q894.4 606.2 894.4 607.8 V612.6 Q894.6 611.4 895.8 611.4 Q897 611.4 897.1 612.6 V613.3 Q897.3 612.3 898.3 612.3 Q899.4 612.3 899.5 613.5 V614.5 Q899.7 613.5 900.8 613.5 Q902.1 613.5 902.1 615 V621.5 Q902.1 624.5 899.8 627.2 H893.2 L888 620.8 Q887.1 619.6 888.2 618.9 Q889.4 618.2 890.5 619.3 L891.6 620.4 Z" fill="#ffffff" stroke="#0a0a0a" stroke-width="0.9" stroke-linejoin="round"/><path d="M894.4 612.6 V616.5 M897.1 613.3 V616.5 M899.5 614.5 V616.5" stroke="#0a0a0a" stroke-width="0.6"/>
<path d="M1025.5 311 H1035.5 V314.5 H1032 V320.5 H1029 V314.5 H1025.5 Z" fill="#9a9a9a"/>
</svg>
</div>
</body></html>
